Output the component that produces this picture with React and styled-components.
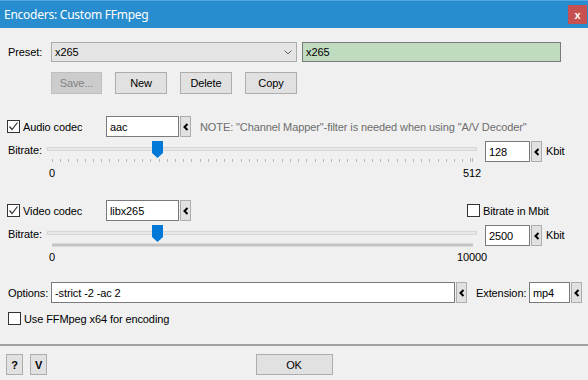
import React from 'react';
import styled, { createGlobalStyle } from 'styled-components';

const Global = createGlobalStyle`
  html, body { margin: 0; padding: 0; background: #f0f0f0; }
  body {
    width: 588px; height: 380px; overflow: hidden;
    font-family: "Liberation Sans", Arial, sans-serif; font-size: 11px; color: #000;
    letter-spacing: -0.1px;
  }
  * { box-sizing: border-box; }
`;

const Window = styled.div`
  width: 588px; height: 380px; background: #f0f0f0;
  display: flex; flex-direction: column;
`;

const TitleBar = styled.div`
  flex: none; height: 28px; background: #288dce; border-top: 1px solid #4ea8e4;
  display: flex; align-items: center; justify-content: space-between;
  padding: 0 1px 0 4px;
`;

const Title = styled.span`
  font-family: "Noto Sans", "Open Sans", sans-serif; font-size: 12px; color: #fff;
  letter-spacing: -0.25px;
`;

const Close = styled.div`
  width: 19px; height: 19px; background: #c75050; color: #fff;
  display: flex; align-items: center; justify-content: center;
  font: bold 11px "Liberation Sans", Arial, sans-serif;
`;

const Body = styled.div`
  display: flex; flex-direction: column; padding: 14px 8px 0 8px;
`;

const Row = styled.div`
  display: flex; align-items: ${p => p.$align || 'center'};
  height: ${p => p.$h}px; margin-top: ${p => p.$mt || 0}px;
  padding-left: ${p => p.$pl || 0}px;
`;

const Label = styled.span`
  flex: none; width: ${p => (p.$w ? `${p.$w}px` : 'auto')};
  margin-left: ${p => p.$ml || 0}px;
  line-height: ${p => p.$lh || 'normal'};
  color: ${p => p.$color || '#000'};
  white-space: nowrap;
`;

const Combo = styled.div`
  width: 246px; height: 20px; background: #e5e5e5; border: 1px solid #acacac;
  display: flex; align-items: center; justify-content: space-between; padding: 0 4px 0 3px;
`;

const TextBox = styled.div`
  flex: none; width: ${p => p.$w}px; height: ${p => p.$h || 21}px;
  margin-left: ${p => p.$ml || 0}px;
  background: ${p => p.$bg || '#fff'}; border: 1px solid #7a7a7a;
  display: flex; align-items: center; padding-left: 3px; white-space: nowrap;
`;

const ArrowBtn = styled.div`
  flex: none; width: 11px; height: 21px; margin-left: 1px;
  background: #e1e1e1; border: 1px solid #adadad;
  display: flex; align-items: center; justify-content: center;
`;

const ButtonBar = styled.div`
  width: 246px; display: flex; justify-content: space-between;
`;

const Button = styled.div`
  flex: none; width: ${p => p.$w || 52}px; height: ${p => p.$h || 22}px;
  background: ${p => (p.$disabled ? '#cccccc' : '#e1e1e1')};
  border: 1px solid ${p => (p.$disabled ? '#bfbfbf' : '#adadad')};
  color: ${p => (p.$disabled ? '#838383' : '#000')};
  font-weight: ${p => (p.$bold ? 'bold' : 'normal')};
  display: flex; align-items: center; justify-content: center;
`;

const CheckWrap = styled.div`
  flex: none; display: flex; align-items: center;
  width: ${p => (p.$w ? `${p.$w}px` : 'auto')};
  margin-left: ${p => p.$ml || 0}px;
`;

const Box = styled.div`
  flex: none; width: 13px; height: 13px; background: #fff; border: 1px solid #333;
  display: flex; align-items: center; justify-content: center; margin-right: 3px;
`;

const SliderArea = styled.div`
  position: relative; flex: none; width: 430px; height: 21px;
`;

const Track = styled.div`
  position: absolute; left: 0; right: 0; top: 6px; height: 4px;
  background: #e7e7e7; border: 1px solid #d6d6d6;
`;

const Thumb = styled.svg`
  position: absolute; top: 0;
`;

const Ticks = styled.svg`
  position: absolute; left: 5px; top: ${p => p.$top}px;
`;

const Scale = styled.div`
  display: flex; justify-content: space-between;
  width: 420px; margin-left: 44px; height: 14px; margin-top: ${p => p.$mt || 0}px;
`;

const ScalePoint = styled.div`
  width: 0; display: flex; justify-content: center; line-height: 14px;
`;

const Separator = styled.div`
  height: 2px; background: #a0a0a0; margin-top: ${p => p.$mt}px; flex: none;
`;

const Footer = styled.div`
  display: grid; grid-template-columns: 1fr auto 1fr; align-items: center;
  margin-top: 8px; padding: 0 6px;
`;

const FooterLeft = styled.div`
  display: flex; gap: 7px;
`;

const Chevron = () => (
  <svg width="6" height="8" viewBox="0 0 6 8">
    <polyline points="4.5,1 1.5,4 4.5,7" fill="none" stroke="#000" strokeWidth="2" />
  </svg>
);

const Check = ({ checked }) => (
  <Box>
    {checked && (
      <svg width="11" height="11" viewBox="0 0 11 11">
        <polyline points="1.5,5.5 4,8.5 9.5,1.5" fill="none" stroke="#333" strokeWidth="1.2" />
      </svg>
    )}
  </Box>
);

const Slider = ({ value, max, step, dense }) => {
  const w = 420;
  const ticks = [];
  if (!dense) {
    for (let v = 0; v <= max; v += step) ticks.push((v / max) * w);
    ticks.push(w);
  }
  const left = 5 + (w * value) / max - 5.5;
  return (
    <SliderArea>
      <Track />
      <Thumb width="11" height="17" viewBox="0 0 11 17" style={{ left }}>
        <path d="M0 0 H11 V12 L5.5 17 L0 12 Z" fill="#0078d7" />
      </Thumb>
      <Ticks width="422" height="4" viewBox="0 0 422 4" $top={dense ? 18 : 17}>
        {dense ? (
          <rect x="0" y="0.5" width="421" height="3" fill="#c4c4c4" />
        ) : (
          ticks.map((x, i) => (
            <rect key={i} x={Math.round(x)} y={i >= ticks.length - 2 ? 0 : 1} width="1" height={i >= ticks.length - 2 ? 4 : 3} fill="#b8b8b8" />
          ))
        )}
      </Ticks>
    </SliderArea>
  );
};

export default function App() {
  return (
    <Window>
      <Global />
      <TitleBar>
        <Title>Encoders: Custom FFmpeg</Title>
        <Close>x</Close>
      </TitleBar>
      <Body>
        <Row $h={20}>
          <Label $w={43}>Preset:</Label>
          <Combo>
            <span>x265</span>
            <svg width="8" height="5" viewBox="0 0 8 5">
              <polyline points="0.5,0.5 4,4 7.5,0.5" fill="none" stroke="#606060" strokeWidth="1" />
            </svg>
          </Combo>
          <TextBox $w={259} $h={20} $ml={5} $bg="#c0dcc0">x265</TextBox>
        </Row>
        <Row $h={22} $mt={10} $pl={43}>
          <ButtonBar>
            <Button $w={51} $disabled>Save...</Button>
            <Button>New</Button>
            <Button>Delete</Button>
            <Button>Copy</Button>
          </ButtonBar>
        </Row>

        <Row $h={21} $mt={22}>
          <CheckWrap $w={99} $ml={-1}>
            <Check checked />
            <span>Audio codec</span>
          </CheckWrap>
          <TextBox $w={73}>aac</TextBox>
          <ArrowBtn><Chevron /></ArrowBtn>
          <Label $ml={9} $color="#6d6d6d">NOTE: "Channel Mapper"-filter is needed when using "A/V Decoder"</Label>
        </Row>
        <Row $h={21} $mt={4} $align="flex-start">
          <Label $w={39} $lh="18px">Bitrate:</Label>
          <Slider value={128} max={512} step={10} />
          <TextBox $w={45} $ml={8}>128</TextBox>
          <ArrowBtn><Chevron /></ArrowBtn>
          <Label $ml={4} $lh="21px">Kbit</Label>
        </Row>
        <Scale $mt={4}>
          <ScalePoint>0</ScalePoint>
          <ScalePoint>512</ScalePoint>
        </Scale>

        <Row $h={21} $mt={20}>
          <CheckWrap $w={99} $ml={-1}>
            <Check checked />
            <span>Video codec</span>
          </CheckWrap>
          <TextBox $w={73}>libx265</TextBox>
          <ArrowBtn><Chevron /></ArrowBtn>
          <CheckWrap $ml={276}>
            <Check />
            <span>Bitrate in Mbit</span>
          </CheckWrap>
        </Row>
        <Row $h={21} $mt={4} $align="flex-start">
          <Label $w={39} $lh="18px">Bitrate:</Label>
          <Slider value={2500} max={10000} dense />
          <TextBox $w={45} $ml={8}>2500</TextBox>
          <ArrowBtn><Chevron /></ArrowBtn>
          <Label $ml={4} $lh="21px">Kbit</Label>
        </Row>
        <Scale $mt={4}>
          <ScalePoint>0</ScalePoint>
          <ScalePoint>10000</ScalePoint>
        </Scale>

        <Row $h={21} $mt={18}>
          <Label $w={43}>Options:</Label>
          <TextBox $w={404}>-strict -2 -ac 2</TextBox>
          <ArrowBtn><Chevron /></ArrowBtn>
          <Label $w={53} $ml={9}>Extension:</Label>
          <TextBox $w={41}>mp4</TextBox>
          <ArrowBtn><Chevron /></ArrowBtn>
        </Row>
        <Row $h={13} $mt={9}>
          <CheckWrap>
            <Check />
            <span>Use FFMpeg x64 for encoding</span>
          </CheckWrap>
        </Row>
      </Body>
      <Separator $mt={19} />
      <Footer>
        <FooterLeft>
          <Button $w={17} $h={21} $bold>?</Button>
          <Button $w={17} $h={21} $bold>V</Button>
        </FooterLeft>
        <Button $w={77} $h={21}>OK</Button>
        <div />
      </Footer>
    </Window>
  );
}
